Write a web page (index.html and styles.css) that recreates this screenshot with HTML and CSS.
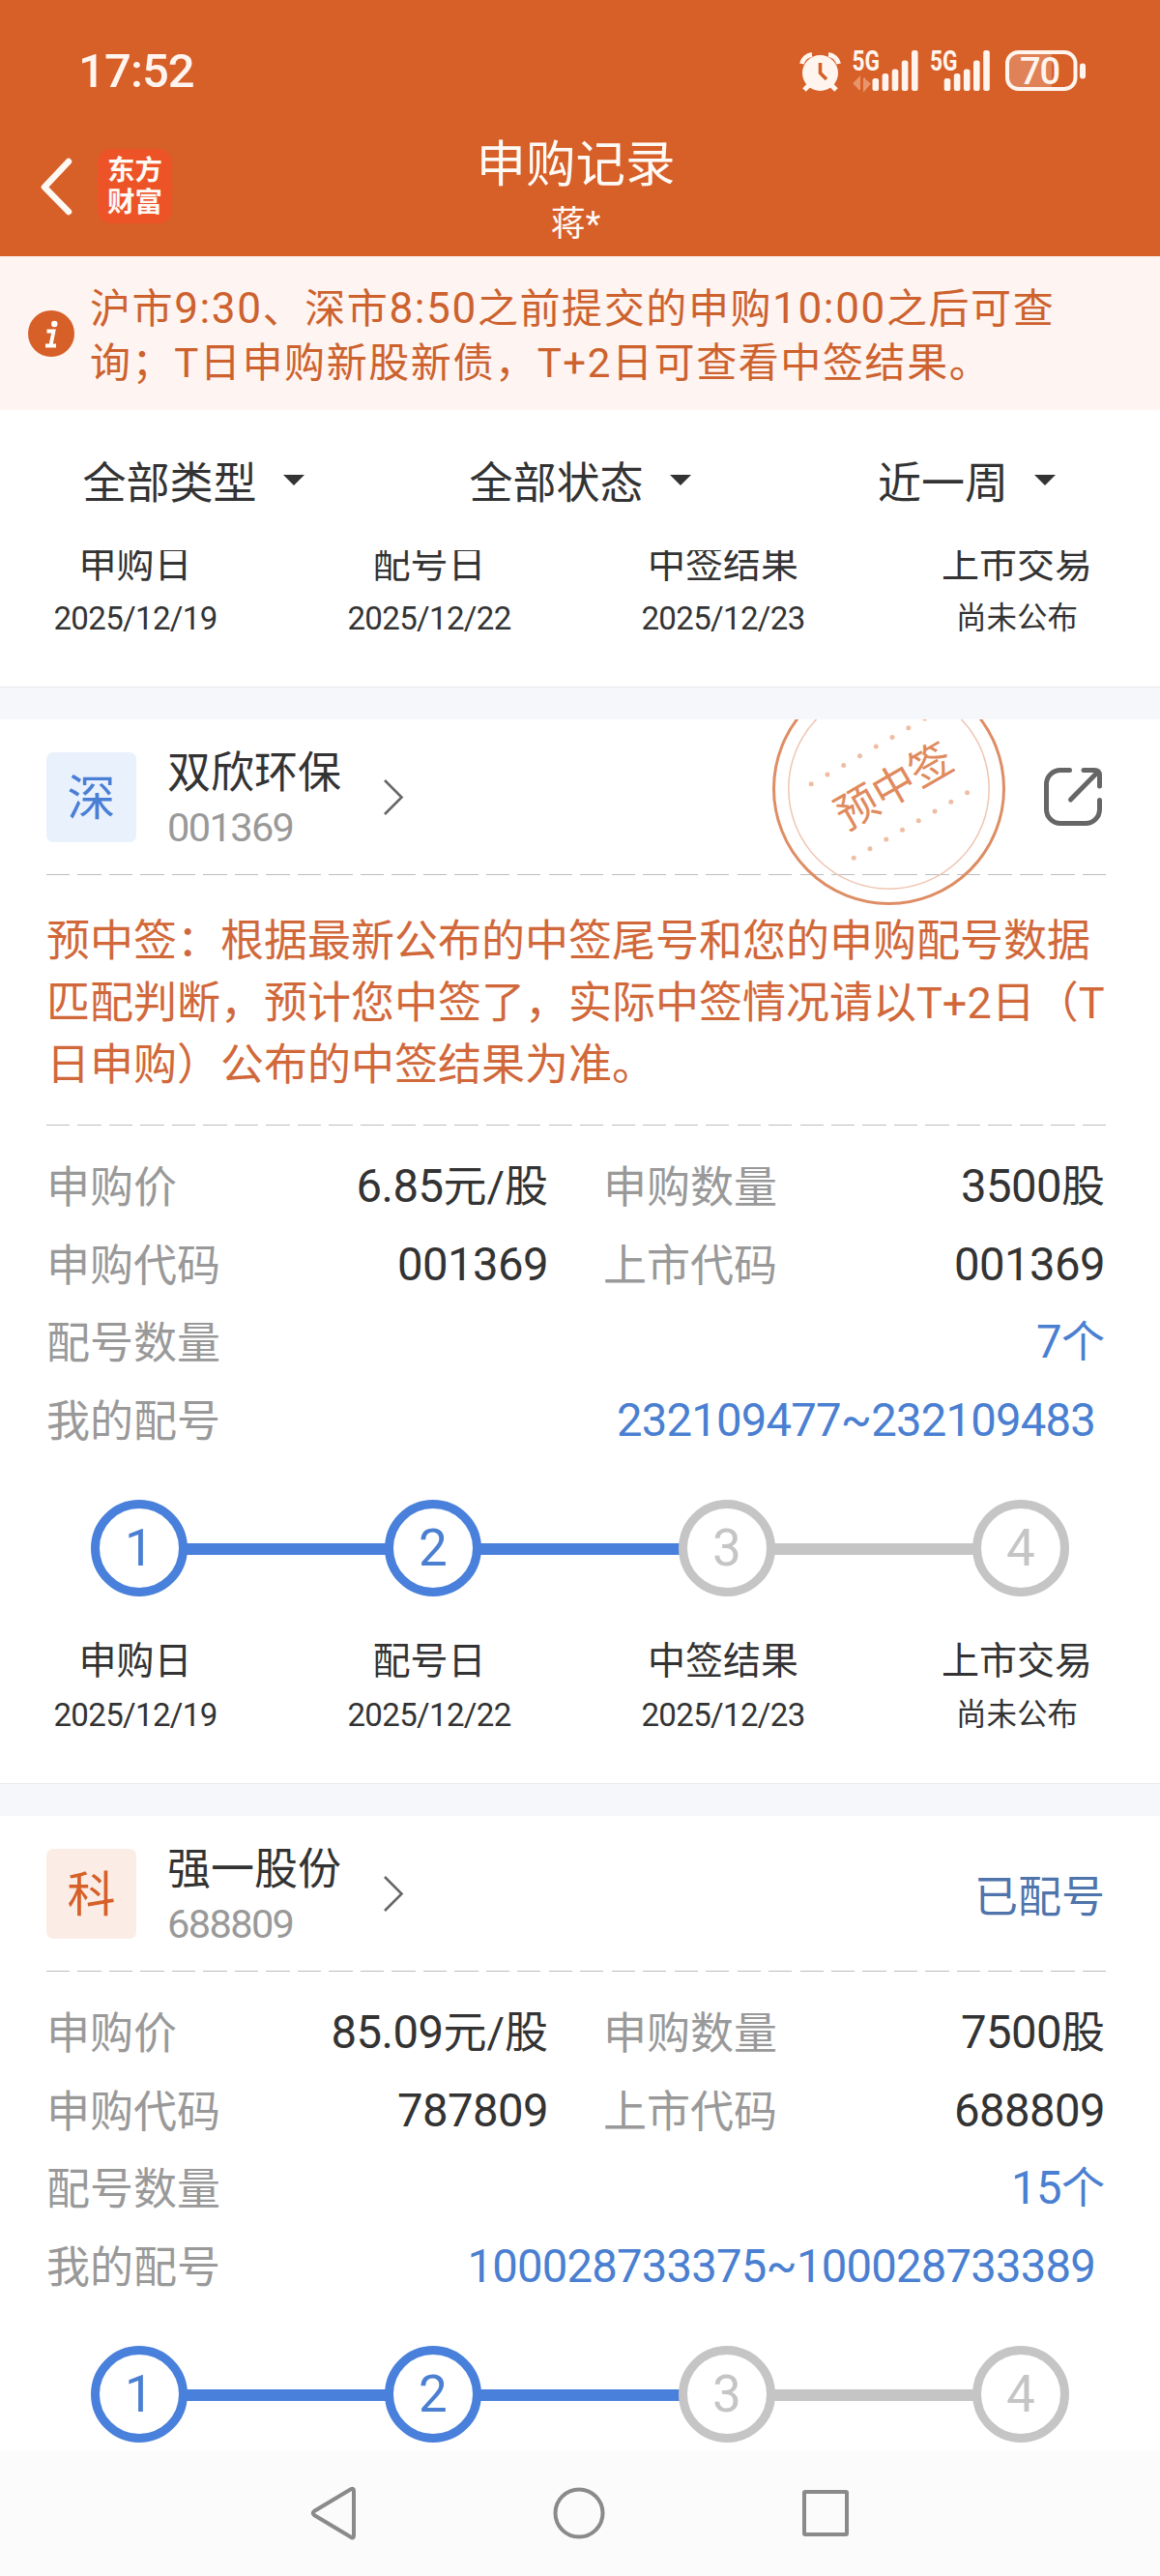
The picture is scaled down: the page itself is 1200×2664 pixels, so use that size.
FILE: index.html
```html
<!DOCTYPE html>
<html lang="zh-CN">
<head>
<meta charset="utf-8">
<title>申购记录</title>
<link rel="stylesheet" href="styles.css">
</head>
<body>
<div class="screen">
  <header class="top">
    <div class="status">
      <span class="clock">17:52</span>
      <svg class="status-icons" width="300" height="68" viewBox="826 38 300 68">
        <g fill="none" stroke="#fff5ee" stroke-linecap="butt">
          <path d="M829.500 66 A12 12 0 0 1 840 56.500" stroke-width="5"/>
          <path d="M867.500 66 A12 12 0 0 0 857 56.500" stroke-width="5"/>
          <path d="M838 87 L832 93 M859 87 L865 93" stroke-width="5"/>
        </g>
        <ellipse cx="848.500" cy="75.500" rx="18.500" ry="18.500" fill="#fff5ee"/>
        <path d="M848.500 65 V75.500 L855 82" fill="none" stroke="#d75f28" stroke-width="3.600"/>
        <g class="net"><text x="881.500" y="73" textLength="28.500" lengthAdjust="spacingAndGlyphs">5G</text><text x="962" y="73" textLength="28.500" lengthAdjust="spacingAndGlyphs">5G</text></g>
        <path d="M883 87 L889 80.500 V93 M900 86 L894 93 V80.500" fill="#e8956c" stroke="#e8956c" stroke-width="2"/>
        <g fill="#fff5ee">
          <rect x="902.500" y="81" width="6.600" height="13" rx="2.500"/><rect x="912.600" y="76" width="6.600" height="18" rx="2.500"/><rect x="922.700" y="71.500" width="6.600" height="22.500" rx="2.500"/><rect x="932.800" y="62.500" width="6.600" height="31.500" rx="2.500"/><rect x="943" y="52" width="6.600" height="42" rx="2.500"/>
          <rect x="976.700" y="81" width="6.600" height="13" rx="2.500"/><rect x="986.800" y="76" width="6.600" height="18" rx="2.500"/><rect x="996.900" y="71.500" width="6.600" height="22.500" rx="2.500"/><rect x="1007" y="62.500" width="6.600" height="31.500" rx="2.500"/><rect x="1017.200" y="52" width="6.600" height="42" rx="2.500"/>
          <rect x="1117" y="65.500" width="6" height="16" rx="3"/>
        </g>
        <path d="M1052 55 H1088 V91 H1052 A10 10 0 0 1 1042 81 V65 A10 10 0 0 1 1052 55 Z" fill="#e08257"/>
        <rect x="1042" y="54" width="70.500" height="38" rx="11.500" fill="none" stroke="#fff5ee" stroke-width="4"/>
        <text class="charge" x="1075.500" y="87" text-anchor="middle">70</text>
      </svg>
    </div>
    <div class="titlebar">
      <div class="back">
        <svg width="36" height="60" viewBox="0 0 36 60"><path d="M31 4 L6 30.500 L31 56" fill="none" stroke="#fff9f4" stroke-width="6.500" stroke-linejoin="round" stroke-linecap="round"/></svg>
        <div class="logo"><span>东方</span><span>财富</span></div>
      </div>
      <div class="titles"><h1>申购记录</h1><p>蒋*</p></div>
      <div></div>
    </div>
  </header>

  <section class="tip">
    <svg width="48" height="48" viewBox="0 0 48 48"><circle cx="24" cy="24" r="24" fill="#d75f28"/><circle cx="27.300" cy="14" r="3.200" fill="#fff"/><path d="M19.500 21.500 H26.500 L23.500 36 M18 36.500 H29" fill="none" stroke="#fff" stroke-width="3.800"/></svg>
    <p>沪市<span class="num">9:30</span>、深市<span class="num">8:50</span>之前提交的申购<span class="num">10:00</span>之后可查<br>询；T日申购新股新债，T+2日可查看中签结果。</p>
  </section>

  <nav class="filters">
    <div>全部类型<i></i></div>
    <div>全部状态<i></i></div>
    <div>近一周<i></i></div>
  </nav>

  <main class="list">
    <article class="card partial">
      <div class="stages">
        <div><b>申购日</b><span>2025/12/19</span></div>
        <div><b>配号日</b><span>2025/12/22</span></div>
        <div><b>中签结果</b><span>2025/12/23</span></div>
        <div><b>上市交易</b><span class="han">尚未公布</span></div>
      </div>
    </article>

    <article class="card">
      <svg class="stamp" width="242" height="194" viewBox="798 744 242 194">
        <circle cx="919.500" cy="815.500" r="119" fill="none" stroke="#de8d64" stroke-width="3"/>
        <circle cx="919.500" cy="815.500" r="103.700" fill="none" stroke="#efc5b0" stroke-width="1.500"/>
        <g fill="none" stroke="#eebda4" stroke-width="5" stroke-linecap="round" stroke-dasharray="0 19.350">
          <path d="M839.200 810.700 L956.700 743"/><path d="M883.200 887.300 L1000.700 819.600"/>
        </g>
        <text transform="translate(924.500 812.700) rotate(-30)" x="0" y="16" text-anchor="middle">预中签</text>
      </svg>
      <div class="head">
        <div class="badge blue">深</div>
        <div class="stock"><h2>双欣环保</h2><p>001369</p></div>
        <svg class="chev" width="22" height="40" viewBox="0 0 22 40"><path d="M2 3 L19.500 20.500 L2 38" fill="none" stroke="#666" stroke-width="2.600"/></svg>
        <svg class="share" width="60" height="60" viewBox="0 0 60 60"><path d="M26.500 2.500 H17 A14.500 14.500 0 0 0 2.500 17 V43 A14.500 14.500 0 0 0 17 57.500 H43 A14.500 14.500 0 0 0 57.500 43 V33.500 M41 2.500 H52 Q57.500 2.500 57.500 8 V19 M55.500 4.500 L27.500 33" fill="none" stroke="#666" stroke-width="5" stroke-linecap="round"/></svg>
      </div>
      <hr>
      <p class="note">预中签：根据最新公布的中签尾号和您的申购配号数据<br>匹配判断，预计您中签了，实际中签情况请以T+2日（T<br>日申购）公布的中签结果为准。</p>
      <hr>
      <dl class="rows">
        <div><dt>申购价</dt><dd><span class="num">6.85</span>元/股</dd><dt>申购数量</dt><dd><span class="num">3500</span>股</dd></div>
        <div><dt>申购代码</dt><dd><span class="num">001369</span></dd><dt>上市代码</dt><dd><span class="num">001369</span></dd></div>
        <div class="wide"><dt>配号数量</dt><dd class="link"><span class="num">7</span>个</dd></div>
        <div class="wide"><dt>我的配号</dt><dd class="link inset"><span class="num">232109477~232109483</span></dd></div>
      </dl>
      <div class="steps"><span class="on">1</span><i class="on"></i><span class="on">2</span><i class="on"></i><span>3</span><i></i><span>4</span></div>
      <div class="stages">
        <div><b>申购日</b><span>2025/12/19</span></div>
        <div><b>配号日</b><span>2025/12/22</span></div>
        <div><b>中签结果</b><span>2025/12/23</span></div>
        <div><b>上市交易</b><span class="han">尚未公布</span></div>
      </div>
    </article>

    <article class="card">
      <div class="head">
        <div class="badge orange">科</div>
        <div class="stock"><h2>强一股份</h2><p>688809</p></div>
        <svg class="chev" width="22" height="40" viewBox="0 0 22 40"><path d="M2 3 L19.500 20.500 L2 38" fill="none" stroke="#666" stroke-width="2.600"/></svg>
        <div class="state">已配号</div>
      </div>
      <hr>
      <dl class="rows">
        <div><dt>申购价</dt><dd><span class="num">85.09</span>元/股</dd><dt>申购数量</dt><dd><span class="num">7500</span>股</dd></div>
        <div><dt>申购代码</dt><dd><span class="num">787809</span></dd><dt>上市代码</dt><dd><span class="num">688809</span></dd></div>
        <div class="wide"><dt>配号数量</dt><dd class="link"><span class="num">15</span>个</dd></div>
        <div class="wide"><dt>我的配号</dt><dd class="link inset"><span class="num">100028733375~100028733389</span></dd></div>
      </dl>
      <div class="steps"><span class="on">1</span><i class="on"></i><span class="on">2</span><i class="on"></i><span>3</span><i></i><span>4</span></div>
    </article>
  </main>

  <footer class="keys">
    <svg width="60" height="60" viewBox="0 0 60 60"><path d="M52 7 V53 Q52 57 48.500 54.500 L11 32 Q8.500 30 11 28 L48.500 5.500 Q52 3.500 52 7 Z"/></svg>
    <svg width="60" height="60" viewBox="0 0 60 60"><circle cx="30" cy="30" r="24.500"/></svg>
    <svg width="60" height="60" viewBox="0 0 60 60"><rect x="8" y="8" width="44" height="44" rx="1"/></svg>
  </footer>
</div>
</body>
</html>
```
FILE: styles.css
```css
* { box-sizing: border-box; margin: 0; padding: 0; }
body { background: #fff; }
h1, h2, b { font-weight: 400; }
i { font-style: normal; }

.screen {
  width: 1200px;
  height: 2664px;
  display: flex;
  flex-direction: column;
  overflow: hidden;
  font-family: Roboto, "Noto Sans CJK SC", sans-serif;
  font-size: 45px;
  color: #333;
  white-space: nowrap;
}
.num { font-size: 1.05em; letter-spacing: -0.012em; }

/* header */
.top { height: 265px; background: #d75f28; color: #fffaf5; }
.status {
  height: 124px;
  padding: 0 74px 0 81px;
  display: flex;
  justify-content: space-between;
  align-items: flex-start;
}
.clock { margin-top: 44px; font-size: 49px; line-height: 60px; font-weight: 500; color: #fff5ee; letter-spacing: -0.9px; }
.status-icons { margin-top: 38px; }
.net { font: 700 29px Roboto, sans-serif; fill: #fff5ee; }
.charge { font: 500 38px Roboto, sans-serif; fill: #fff5ee; letter-spacing: -1px; }
.titlebar { height: 141px; display: grid; grid-template-columns: 1fr auto 1fr; }
.back { display: flex; align-items: center; height: 77px; margin-top: 30px; padding-left: 40px; gap: 25px; }
.logo {
  width: 77px;
  height: 77px;
  border-radius: 14px;
  background: #ec5428;
  display: flex;
  flex-direction: column;
  align-items: center;
  padding-top: 7px;
  font-size: 28.500px;
  line-height: 32.500px;
  font-weight: 700;
}
.titles { text-align: center; margin-left: -9px; }
.titles h1 { font-size: 51.500px; line-height: 70px; margin-top: 12px; }
.titles p { font-size: 36px; line-height: 50px; margin-top: 1px; }

/* hint */
.tip {
  height: 159px;
  background: #fef4f1;
  display: flex;
  align-items: center;
  gap: 16px;
  padding-left: 29px;
  color: #cd622e;
}
.tip p { font-size: 42px; line-height: 55.500px; letter-spacing: 1.600px; padding-top: 6px; }
.tip .num { letter-spacing: 1.600px; }

/* filters */
.filters { height: 145px; display: grid; grid-template-columns: repeat(3, 400px); }
.filters div { display: flex; align-items: center; justify-content: center; gap: 27px; padding-bottom: 1px; }
.filters i { border: 11px solid transparent; border-top: 11px solid #333; border-bottom: 0; }

/* cards */
.list { height: 1965px; overflow: hidden; }
.card { position: relative; }
.card + .card { border-top: 33px solid #f6f7fa; }
.head { height: 160px; padding: 0 60px 0 48px; display: flex; align-items: center; }
.badge {
  width: 93px;
  height: 93px;
  border-radius: 7px;
  font-size: 50px;
  line-height: 96px;
  text-align: center;
}
.blue { background: #e9f1fc; color: #4a7fd6; }
.orange { background: #fbede6; color: #d75f28; }
.stock { width: 178px; margin-left: 32px; padding-top: 7px; }
.stock h2 { font-size: 45px; line-height: 56px; }
.stock p { font-size: 41.500px; line-height: 56px; letter-spacing: -1.600px; color: #999; }
.chev { margin-left: 45px; }
.share { margin-left: auto; }
.state { margin-left: auto; margin-right: -3px; font-size: 45px; color: #4e74ab; }
.stamp { position: absolute; left: 798px; top: 0; }
.stamp text { font: 44px "Noto Sans CJK SC", sans-serif; fill: #e08a5e; }
hr {
  height: 1px;
  border: 0;
  margin: 0 56px 0 48px;
  background: repeating-linear-gradient(90deg, #bdbdbd 0 24.300px, transparent 24.300px 32.480px);
}
.note { height: 258px; padding: 37px 0 0 48px; line-height: 64px; color: #d1683a; }

.rows { padding: 23px 57px 0 48px; }
.rows div {
  height: 80.500px;
  display: grid;
  grid-template-columns: 250px 269px 58px 250px 1fr;
  line-height: 80px;
}
.rows div.wide { grid-template-columns: 250px 1fr; }
.rows dt { color: #999; padding-top: 2px; }
.rows dd { text-align: right; }
.rows dt:nth-of-type(2) { grid-column: 4; margin-left: -1px; }
.rows .link { color: #4a7fd1; }
.rows .inset { padding-right: 10px; }
.rows .inset .num { letter-spacing: -0.8px; }

.steps { display: flex; align-items: center; margin-top: 42px; padding-left: 94px; }
.steps span {
  width: 100px;
  height: 100px;
  border: 9.500px solid #c5c5c5;
  border-radius: 50%;
  font-size: 53px;
  line-height: 82px;
  text-align: center;
  color: #c5c5c5;
}
.steps i { width: 206px; height: 12px; margin: 2px -1px 0; background: #c5c5c5; }
.steps span.on { border-color: #4980db; color: #4a7fd1; }
.steps i.on { background: #4980db; }

.stages {
  display: grid;
  grid-template-columns: repeat(4, 304px);
  margin: 38px 0 0 -12px;
  padding-bottom: 43px;
  border-bottom: 1px solid #e8eaed;
  text-align: center;
}
.stages b { display: block; font-size: 39px; line-height: 57px; padding-top: 1px; }
.stages span { display: block; font-size: 33px; line-height: 54px; letter-spacing: -0.650px; }
.stages .han { font-size: 31.500px; letter-spacing: 0; }
.partial .stages { margin-top: 0; }
.partial { margin-top: -14px; }

/* system keys */
.keys {
  height: 130px;
  background: #fbfbfb;
  display: flex;
  justify-content: center;
  align-items: center;
  gap: 195px;
  padding-right: 2px;
}
.keys svg { fill: none; stroke: #8a8a8a; stroke-width: 4; }
```
